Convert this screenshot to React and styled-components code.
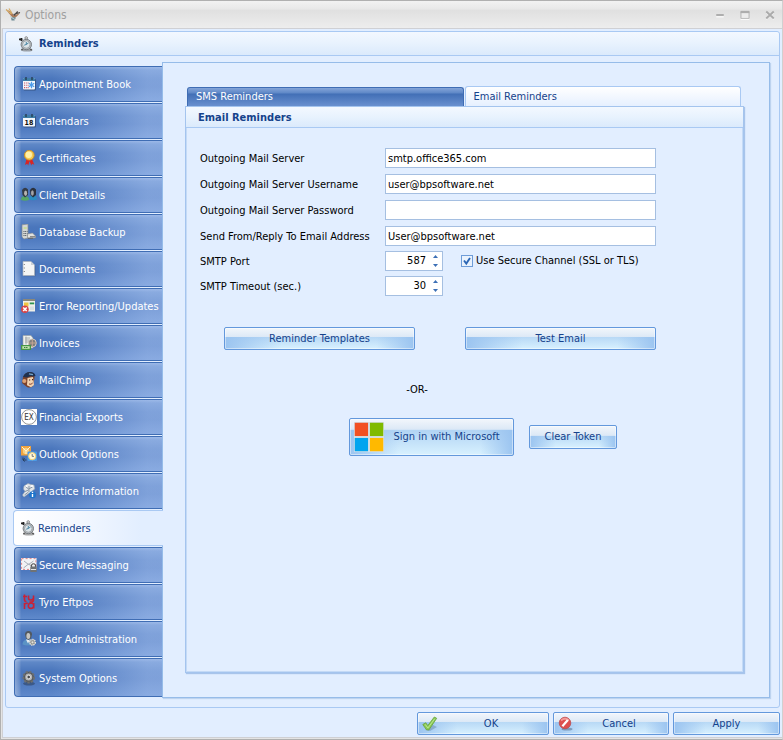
import React, { useState } from 'react';
import styled, { createGlobalStyle, css } from 'styled-components';

const GlobalStyle = createGlobalStyle`
  * {
    box-sizing: border-box;
  }

  body {
    margin: 0;
    font-family: "DejaVu Sans Condensed", "Noto Sans", sans-serif;
    font-size: 11px;
    line-height: 14px;
    color: #000;
  }

  button, input {
    font: inherit;
    margin: 0;
  }
`;

/* ---------- Window ---------- */

const Window = styled.div`
  display: flex;
  flex-direction: column;
  min-height: 100vh;
  background: #e4e4e4;
  border: 1px solid #b0b0b0;
  border-right-color: #d0d0d0;
`;

const TitleBar = styled.header`
  display: flex;
  align-items: center;
  height: 27px;
  padding: 0 1px 0 4px;
  gap: 4px;
  background: linear-gradient(#f2f2f2, #e8e8e8 30%, #e0e0e0 34%, #ededed);
`;

const WindowTitle = styled.h1`
  flex: 1;
  margin: 0;
  font-size: 12px;
  line-height: 16px;
  font-weight: normal;
  color: #a0a0a0;
`;

const WindowButton = styled.button`
  display: flex;
  width: 21px;
  padding: 0 6px 0 5px;
  border: none;
  background: none;
`;

const Body = styled.div`
  flex: 1;
  display: flex;
  flex-direction: column;
  margin: 0 0 1px 1px;
  padding: 2px 2px 2px 2px;
  border: 1px solid #cfd0d4;
  border-right: none;
  background: #e2eeff;
`;

const GroupBox = styled.section`
  flex: 1;
  display: flex;
  flex-direction: column;
  border: 1px solid #a9c9f3;
  border-radius: 3px;
`;

const headerFill = css`
  background: linear-gradient(#f3f8ff, #e9f3fe 45%, #dbeafc);
  border-bottom: 1px solid #a9c9f3;
  color: #15428b;
  font-size: 11px;
  font-weight: bold;
`;

const GroupHeader = styled.h2`
  ${headerFill}
  display: flex;
  align-items: center;
  gap: 5px;
  height: 24px;
  margin: 0;
  padding: 0 12px;
  border-radius: 3px 3px 0 0;
`;

const Columns = styled.div`
  flex: 1;
  display: flex;
  padding: 6px 9px 9px 7px;
`;

/* ---------- Sidebar ---------- */

const Sidebar = styled.nav`
  display: flex;
  flex-direction: column;
  flex: 0 0 149px;
  gap: 1px;
  padding-top: 4px;
`;

const SideItem = styled.button`
  display: flex;
  align-items: center;
  gap: 2px;
  height: 36px;
  margin-left: 1px;
  padding: 0 0 0 6px;
  border: 1px solid #3f6db4;
  border-right: none;
  border-radius: 4px 0 0 4px;
  color: #fff;
  text-align: left;
  white-space: nowrap;
  background:
    linear-gradient(90deg, rgba(255, 255, 255, 0.35), rgba(255, 255, 255, 0.12) 5px, transparent 6px),
    linear-gradient(90deg, transparent 25%, rgba(180, 205, 248, 0.5) 90%),
    linear-gradient(#84a4d8, #5f88c7 3px, #4a76bc 12px, #4874bb 20px, #5f89cb);

  &:last-child {
    height: 39px;
  }

  ${(props) =>
    props.$active &&
    css`
      z-index: 1;
      margin: 0 -1px 0 0;
      border-color: #a9c9f3;
      color: #15428b;
      background: linear-gradient(90deg, #fff, #f4f8ff 40%, #e2eeff 85%);
    `}
`;

const SideLabel = styled.span`
  padding-top: 2px;
`;

/* ---------- Page ---------- */

const Page = styled.main`
  flex: 1;
  display: flex;
  flex-direction: column;
  min-width: 0;
  padding: 23px 25px 24px 22px;
  border: 1px solid #96bce9;
  box-shadow: 1px 1px 1px #bdd3ef;
`;

const TabRow = styled.div`
  display: flex;
  align-items: flex-end;
  gap: 1px;
  padding: 0 3px 0 2px;
`;

const Tab = styled.button`
  flex: 1 1 50%;
  height: 19px;
  padding: 0 8px;
  border: 1px solid #3f6db4;
  border-bottom: none;
  border-radius: 3px 3px 0 0;
  color: #fff;
  text-align: left;
  background: linear-gradient(#84a4d8, #5f88c7 5px, #426fb6 6px, #6990cf);

  ${(props) =>
    props.$active &&
    css`
      height: 20px;
      border-color: #a9c9f3;
      color: #15428b;
      background: linear-gradient(#fff, #e6f0ff);
    `}
`;

const Panel = styled.section`
  flex: 1;
  border: 1px solid #a4c4ee;
  box-shadow: inset 0 0 0 1px #c4daf6, 1px 1px 1px #a8c4ea;
`;

const PanelHeader = styled.h3`
  ${headerFill}
  height: 21px;
  margin: 0;
  padding: 0 12px;
  line-height: 21px;
`;

const Form = styled.form`
  display: flex;
  flex-direction: column;
  padding: 20px 14px;
`;

const FieldGrid = styled.div`
  display: grid;
  grid-template-columns: 185px 271px;
  align-items: center;
  row-gap: ${(props) => (props.$tight ? 5 : 6)}px;
  margin-bottom: ${(props) => (props.$tight ? 31 : 5)}px;

  > label {
    padding-top: 2px;
  }
`;

const TextBox = styled.input`
  width: 100%;
  height: 20px;
  padding: 0 2px;
  border: 1px solid #a5bfe1;
  background: #fff;
  color: #000;
`;

const SpinRow = styled.div`
  display: flex;
  align-items: center;
  gap: 18px;
`;

const SpinBox = styled.div`
  display: flex;
  width: 58px;
  height: 20px;
  border: 1px solid #a5bfe1;
  background: #fff;
`;

const SpinInput = styled.input`
  flex: 1;
  min-width: 0;
  padding: 0 2px;
  border: none;
  text-align: right;
`;

const SpinArrows = styled.div`
  display: flex;
  flex-direction: column;
  width: 14px;
`;

const SpinArrow = styled.button`
  flex: 1;
  display: flex;
  align-items: center;
  justify-content: center;
  padding: 0;
  border: none;
  background: none;
`;

const CheckLabel = styled.label`
  display: flex;
  align-items: center;
  gap: 3px;
  white-space: nowrap;
`;

const CheckBox = styled.input`
  appearance: none;
  width: 12px;
  height: 12px;
  border: 1px solid #6e9cd8;
  background: #dceafb;

  &:checked {
    background: #e9f2fd
      url("data:image/svg+xml,%3Csvg xmlns='http://www.w3.org/2000/svg' viewBox='0 0 10 10'%3E%3Cpath d='M2 4.5l2.3 3L8 2' fill='none' stroke='%232b66b5' stroke-width='1.9'/%3E%3C/svg%3E");
  }
`;

const Button = styled.button`
  display: flex;
  align-items: center;
  width: ${(props) => props.$width}px;
  height: ${(props) => props.$height || 23}px;
  padding: 0 4px;
  border: 1px solid #6398dc;
  border-radius: 2px;
  color: #15428b;
  background:
    linear-gradient(#f2f6fb, #dbe8f6) top / 100% ${(props) => (props.$height > 30 ? 30 : 45)}% no-repeat,
    linear-gradient(90deg, #9bc4f0, transparent 30%, transparent 80%, #9bc4f0),
    linear-gradient(#b3d5f4 35%, #d8f1ff);
  box-shadow: inset 0 0 0 1px rgba(255, 255, 255, 0.45);
`;

const ButtonText = styled.span`
  flex: 1;
  text-align: center;
`;

const ActionRow = styled.div`
  display: flex;
  align-items: center;
  justify-content: ${(props) => (props.$spread ? 'space-between' : 'flex-start')};
  gap: 15px;
  width: 432px;
  margin-left: ${(props) => (props.$spread ? 24 : 149)}px;
`;

const OrText = styled.p`
  width: 434px;
  margin: 33px 0 21px;
  text-align: center;
`;

const Footer = styled.footer`
  display: flex;
  justify-content: flex-end;
  gap: 4px;
  padding-top: 4px;
`;

/* ---------- Icons ---------- */

const Icon = styled.svg.attrs({ viewBox: '0 0 16 16', 'aria-hidden': true })`
  flex: none;
  width: ${(props) => props.$size || 16}px;
  height: ${(props) => props.$size || 16}px;
`;

const Calendar = () => (
  <>
    <rect x="2.5" y="3" width="12.5" height="11.5" rx="1" fill="#2d3f60" opacity=".6" />
    <rect x="2" y="2" width="12" height="11.5" rx="1" fill="#f4f7fb" />
    <path d="M2 3a1 1 0 011-1h10a1 1 0 011 1v2H2z" fill="#3f7fa8" />
    <path d="M5 1v3M11 1v3" stroke="#26384c" strokeWidth="1.3" />
  </>
);

const Clock = () => (
  <>
    <ellipse cx="9" cy="14" rx="5.5" ry="1.6" fill="#555" opacity=".5" />
    <path d="M1 3.4h3.5M3.4 2v3" stroke="#222" strokeWidth="1.6" />
    <path d="M4.5 4.3l1.5 1.4" stroke="#777" />
    <circle cx="8.2" cy="2" r="1.3" fill="#e3e6e8" stroke="#777" strokeWidth=".8" />
    <circle cx="8.3" cy="8.5" r="5.2" fill="#b9bdc0" stroke="#6f7579" strokeWidth=".9" />
    <circle cx="8.3" cy="8.5" r="3.7" fill="#dde5e9" stroke="#858b90" strokeWidth=".6" />
    <path d="M8.3 8.5V6M8.3 8.5l2.3-1.6M6.2 9.2l2-.7" stroke="#397b9b" strokeWidth=".9" />
    <path d="M4.6 12.7l-1.2 1.5M12.3 12.7l1.4 1.5" stroke="#555" strokeWidth="1.4" />
  </>
);

const icons = {
  bird: (
    <>
      <path d="M1 2.5l5 2 3 4 6-2.5-3.2 3.6-2.5 1.4-2.8-1.5L4 6.5z" fill="#a8795a" />
      <path d="M1 2.5L6.5 7M4 1.5l3 5" stroke="#d5ac68" strokeWidth="1.2" />
      <path d="M8.5 7.5L15 5.5M9 8.5l3.7-4" stroke="#4a4745" strokeWidth="1.2" />
      <path d="M6 10l5 .5-1.5 3H6.5z" fill="#6c8993" />
      <path d="M5 9.5l5 3" stroke="#b9cfd4" />
    </>
  ),
  appointment: (
    <>
      <Calendar />
      <path d="M3 7h5M3 9.3h5M3 11.6h5" stroke="#c55568" strokeWidth="1.1" strokeDasharray="1.2 1" />
      <path d="M10.5 5.8v6.4M7.8 7.2l5.4 3.6M13.2 7.2l-5.4 3.6" stroke="#4b9bea" strokeWidth="1.3" />
    </>
  ),
  calendar: (
    <>
      <Calendar />
      <text x="8" y="12" textAnchor="middle" fontSize="7" fontWeight="bold" fill="#111">18</text>
    </>
  ),
  certificate: (
    <>
      <path d="M5.5 9L4 15l2.2-1.2 1 1.7L8.5 11l1.8 4.5.8-1.8 2.2 1L11 9z" fill="#d92525" />
      <circle cx="8.3" cy="5.2" r="4.9" fill="#f4cb51" stroke="#c98c27" strokeWidth=".9" />
      <circle cx="7.8" cy="4.7" r="3.2" fill="#fff0a7" />
    </>
  ),
  clients: (
    <>
      <path d="M0 13q0-4 4-4t4 4q-4 1.5-8 0z" fill="#55a566" />
      <path d="M8 12.5q0-4 4-4t4 4q-4 1.5-8 0z" fill="#2b8cc0" />
      <path d="M1 3q3-4 6-.5V8L4 10.5 1.5 8z" fill="#353b45" />
      <ellipse cx="4.6" cy="6.2" rx="1.5" ry="2.8" fill="#b6b4b0" />
      <path d="M9 3q3-4 6-.5V8l-3 2.5L9.5 8z" fill="#2b313c" />
      <ellipse cx="11.4" cy="6" rx="1.4" ry="2.8" fill="#a5a6a8" />
    </>
  ),
  backup: (
    <>
      <path d="M1 .8L7 0v14l-4 1-2-2z" fill="#d3d6d3" stroke="#868c90" strokeWidth=".7" />
      <path d="M2.7 3h3v2h-3z" fill="#c9dc9c" />
      <path d="M2.5 7.5h4M2.5 9.5h4M2.5 11.5h4" stroke="#4d555e" strokeDasharray="1 .7" />
      <path d="M6.5 10l5-1 3 3v2h-8z" fill="#e0e2e0" stroke="#888" strokeWidth=".6" />
      <path d="M9 12.8h5M7 14.3h5" stroke="#666" />
    </>
  ),
  documents: (
    <>
      <path d="M3 1.5h7.5L14.5 5v10.2H3z" fill="#415a83" opacity=".6" />
      <path d="M2 .5h8L13.5 4v10.5H2z" fill="#f5f5f5" stroke="#acb2ba" strokeWidth=".7" />
      <path d="M10 .5V4h3.5" fill="#ccd0d4" />
      <path d="M3.3 3v10" stroke="#777" strokeDasharray="1 2.5" />
    </>
  ),
  error: (
    <>
      <rect x="2" y="1" width="12" height="12.5" fill="#efefe8" />
      <path d="M2 1h12v2H2z" fill="#8b8778" />
      <path d="M3 4.5h4.5v4H3z" fill="#f0c541" />
      <path d="M8.7 4.5h4.5v1.8H8.7z" fill="#2d9350" />
      <path d="M9 8.5h4v3.5H9z" fill="#d7dfe0" />
      <circle cx="3.9" cy="11.2" r="3.8" fill="#d84347" />
      <path d="M2.2 9.5l3.5 3.5M5.7 9.5L2.2 13" stroke="#fff" strokeWidth="1.6" />
    </>
  ),
  invoices: (
    <>
      <path d="M2 .5h8L12 3v10H2z" fill="#edf0ed" stroke="#9b9fa0" strokeWidth=".6" />
      <path d="M4 3h5M4 5h4M4 7h4M5 1.5v8" stroke="#989ca0" strokeWidth=".8" />
      <circle cx="11.3" cy="8" r="4" fill="#7d7d7c" stroke="#d2c9be" />
      <path d="M11.3 4v8M8 8h7" stroke="#c3a693" />
      <path d="M0 10h10v5H0z" fill="#469647" />
      <path d="M1.3 11.2h7.4v2.6H1.3z" fill="#c6e5b4" />
      <path d="M3 12.5h4" stroke="#347a37" strokeDasharray="1.4 .7" />
    </>
  ),
  mailchimp: (
    <>
      <path d="M2 5q2-5 8-5 4 2 3.5 6l-1.5 8q-3 2.5-6 1l-5-4z" fill="#7b422c" />
      <path d="M6.5 6L12 5l1 8-3 2.3-4-2z" fill="#f3d3b0" />
      <circle cx="3.3" cy="9" r="2.1" fill="#dca174" />
      <path d="M2 5Q4 0 9 0t5.5 4l-2.5.6-2-.6-4 1.5z" fill="#1f3150" />
      <path d="M8 1.8l4 .8" stroke="#78a5c9" strokeWidth="1.2" />
      <path d="M8 8h1.2M11 7.6h1.2" stroke="#422" strokeWidth="1.2" />
      <path d="M8 12q2 1 3.7-1" stroke="#8b4533" fill="none" />
    </>
  ),
  exports: (
    <>
      <rect width="16" height="16" fill="#fff" />
      <circle cx="8" cy="8" r="7.4" fill="none" stroke="#777" strokeWidth=".8" />
      <text x="8" y="10.8" textAnchor="middle" fontSize="8" fill="#333">EX</text>
    </>
  ),
  outlook: (
    <>
      <rect x="0" y="0" width="10" height="9.5" fill="#efa23d" />
      <circle cx="5" cy="5" r="3.2" fill="#f8d183" />
      <path d="M1 1l4 4 4-4M5 5v3" stroke="#fff3d5" fill="none" />
      <rect x="6.5" y="5.5" width="9.5" height="9.5" rx="1" fill="#4c9be6" />
      <circle cx="11.2" cy="10.2" r="3.6" fill="#fff8d7" stroke="#f4ce70" />
      <path d="M11.2 8v2.4h1.7" stroke="#777" fill="none" />
      <path d="M2 11.5v2.5h3.5M3.7 12.3L2 14l1.7 1.5" stroke="#29415f" fill="none" />
    </>
  ),
  practice: (
    <>
      <path d="M3 3l4-2.5 3 1 3 .5.8 4L11 8l.5 3-4-.5L3 14l-1.5-2L4 8.5 2.5 6z" fill="#e2e6ea" stroke="#9aa6b0" strokeWidth=".6" />
      <path d="M4.5 3.5l3 2.5 4-2M4 8.5L7.5 7M8 3v6M3.5 12l4-3" stroke="#8796a5" fill="none" />
      <circle cx="5.5" cy="3" r="1" fill="#fff" />
      <circle cx="11" cy="3" r="1" fill="#fff" />
      <circle cx="11.5" cy="11.7" r="3.5" fill="#1f74cb" />
      <path d="M11.5 11v3M11.5 8.8v1.2" stroke="#fff" strokeWidth="1.4" />
    </>
  ),
  clock: <Clock />,
  messaging: (
    <>
      <rect x="0" y="1" width="15.5" height="12" fill="#f2f3f5" />
      <rect x=".6" y="1.6" width="14.3" height="10.8" fill="none" stroke="#e0868a" strokeDasharray="2 2" />
      <path d="M2.5 11l5-4 3 2M3 4l4.5 3.5L12.5 4" stroke="#a8afb8" fill="none" />
      <path d="M10.5 10V8q2-2.5 4 0v2" stroke="#555" fill="none" strokeWidth="1.2" />
      <rect x="9.3" y="9.5" width="6.4" height="5.5" fill="#6f7274" />
      <path d="M10 12.5h5" stroke="#e3e5e7" />
    </>
  ),
  tyro: (
    <path
      d="M3.5.5v5.3q0 1.7 2 1.7M2 2.5h4M7.5 1.5V4q0 2 2.3 2t2.7-2V1.5M12.5 4v2.3q0 2-4 1.7M3.5 15V9M3.5 11q0-2 3.3-1.8M10 9a2.7 2.7 0 110 5.4 2.7 2.7 0 010-5.4M12.7 9v5.5"
      fill="none"
      stroke="#c92336"
      strokeWidth="1.6"
    />
  ),
  user: (
    <>
      <path d="M1.5 13.5q0-4 4-5h3q3 1 3 5-5 2-10 0z" fill="#5b93c5" />
      <path d="M5 8.5l2 4 2-4z" fill="#e9eef2" />
      <path d="M4 3.5Q4 0 7.5 0T11 3.5l-1 4L7.5 9 5 7.5z" fill="#525961" />
      <ellipse cx="7.3" cy="5" rx="1.9" ry="2.9" fill="#c6c5c1" />
      <circle cx="11.5" cy="11.3" r="2.8" fill="#8e918f" stroke="#e5e1da" strokeWidth="1.5" strokeDasharray="1.4 .7" />
      <circle cx="11.5" cy="11.3" r="1.1" fill="#e5e1da" />
    </>
  ),
  system: (
    <>
      <ellipse cx="8" cy="13.6" rx="6" ry="2" fill="#334b70" opacity=".7" />
      <circle cx="7.7" cy="7.2" r="5.4" fill="#585b5d" stroke="#6c6f71" strokeWidth="1.8" strokeDasharray="2.4 1.2" />
      <circle cx="7.7" cy="7" r="3.5" fill="#b3b5b6" />
      <circle cx="7.7" cy="7" r="1.8" fill="#45484b" stroke="#eceded" strokeWidth=".8" />
    </>
  ),
  ok: (
    <>
      <path d="M3 14l5 1 7-4-4-2z" fill="#567799" opacity=".4" />
      <path d="M.8 8.5l3-1.7 2 2.8L12.3 1l2.4 1.3L6.8 14l-2.4-.3z" fill="#8ccb55" stroke="#64a13d" strokeWidth=".8" />
      <path d="M3.2 8.4L5.9 12l6.8-9.2" fill="none" stroke="#b9e690" />
    </>
  ),
  cancel: (
    <>
      <ellipse cx="9" cy="13" rx="5.5" ry="1.6" fill="#4c6586" opacity=".5" />
      <circle cx="7" cy="7" r="5.8" fill="#dd4f4f" stroke="#b9484b" strokeWidth=".7" />
      <path d="M3 4.5q4-3.5 8 0" stroke="#f49a97" strokeWidth="1.8" fill="none" />
      <path d="M4.4 10.2L9.8 4" stroke="#fff" strokeWidth="2.2" />
    </>
  ),
  minimize: (
    <>
      <path d="M2 8h12" stroke="#aaa" strokeWidth="3" />
      <path d="M2 11h12" stroke="#fff" strokeWidth="1.6" />
    </>
  ),
  maximize: (
    <>
      <path d="M1.5 2.5h13v11h-13z" fill="#ececec" stroke="#b5b5b5" strokeWidth="1.6" />
      <path d="M1 3.2h14" stroke="#adadad" strokeWidth="3.6" />
      <path d="M1 15h14" stroke="#fff" strokeWidth="1.4" />
    </>
  ),
  close: (
    <>
      <path d="M2.5 4.5L14 15M13.5 4.5L2 15" stroke="#fff" strokeWidth="2" />
      <path d="M2 2.5l12 11M14 2.5l-12 11" stroke="#aaa" strokeWidth="3" />
    </>
  ),
};

const MicrosoftLogo = () => (
  <Icon $size={30}>
    <path d="M0 0h16v16H0z" fill="#d5dfe7" />
    <path d="M.4.4h7.1v7.1H.4z" fill="#f25022" />
    <path d="M8.5.4h7.1v7.1H8.5z" fill="#7fba00" />
    <path d="M.4 8.5h7.1v7.1H.4z" fill="#00a4ef" />
    <path d="M8.5 8.5h7.1v7.1H8.5z" fill="#ffb900" />
  </Icon>
);

const Triangle = ({ down }) => (
  <svg width="5" height="3" viewBox="0 0 5 3" aria-hidden="true">
    <path d={down ? 'M0 0h5L2.5 3z' : 'M0 3h5L2.5 0z'} fill="#3b6fb6" />
  </svg>
);

/* ---------- Data ---------- */

const sections = [
  ['Appointment Book', 'appointment'],
  ['Calendars', 'calendar'],
  ['Certificates', 'certificate'],
  ['Client Details', 'clients'],
  ['Database Backup', 'backup'],
  ['Documents', 'documents'],
  ['Error Reporting/Updates', 'error'],
  ['Invoices', 'invoices'],
  ['MailChimp', 'mailchimp'],
  ['Financial Exports', 'exports'],
  ['Outlook Options', 'outlook'],
  ['Practice Information', 'practice'],
  ['Reminders', 'clock'],
  ['Secure Messaging', 'messaging'],
  ['Tyro Eftpos', 'tyro'],
  ['User Administration', 'user'],
  ['System Options', 'system'],
];

const textFields = [
  ['server', 'Outgoing Mail Server', 'smtp.office365.com'],
  ['username', 'Outgoing Mail Server Username', 'user@bpsoftware.net'],
  ['password', 'Outgoing Mail Server Password', ''],
  ['replyTo', 'Send From/Reply To Email Address', 'User@bpsoftware.net'],
];

const Spinner = ({ id, initial }) => {
  const [value, setValue] = useState(initial);

  return (
    <SpinBox>
      <SpinInput id={id} value={value} onChange={(e) => setValue(Number(e.target.value) || 0)} />
      <SpinArrows>
        <SpinArrow type="button" aria-label="Increase" onClick={() => setValue(value + 1)}>
          <Triangle />
        </SpinArrow>
        <SpinArrow type="button" aria-label="Decrease" onClick={() => setValue(value - 1)}>
          <Triangle down />
        </SpinArrow>
      </SpinArrows>
    </SpinBox>
  );
};

const App = () => {
  const [section, setSection] = useState('Reminders');
  const [tab, setTab] = useState('Email Reminders');

  return (
    <>
      <GlobalStyle />
      <Window>
        <TitleBar>
          <Icon>{icons.bird}</Icon>
          <WindowTitle>Options</WindowTitle>
          {['minimize', 'maximize', 'close'].map((name) => (
            <WindowButton key={name} type="button" aria-label={name}>
              <Icon $size={10}>{icons[name]}</Icon>
            </WindowButton>
          ))}
        </TitleBar>

        <Body>
          <GroupBox>
            <GroupHeader>
              <Icon>{icons.clock}</Icon>
              {section}
            </GroupHeader>
            <Columns>
              <Sidebar>
                {sections.map(([label, icon]) => (
                  <SideItem
                    key={label}
                    type="button"
                    $active={label === section}
                    onClick={() => setSection(label)}
                  >
                    <Icon>{icons[icon]}</Icon>
                    <SideLabel>{label}</SideLabel>
                  </SideItem>
                ))}
              </Sidebar>

              <Page>
                <TabRow>
                  {['SMS Reminders', 'Email Reminders'].map((name) => (
                    <Tab key={name} type="button" $active={name === tab} onClick={() => setTab(name)}>
                      {name}
                    </Tab>
                  ))}
                </TabRow>
                <Panel>
                  <PanelHeader>{tab}</PanelHeader>
                  <Form onSubmit={(e) => e.preventDefault()}>
                    <FieldGrid>
                      {textFields.map(([id, label, value]) => (
                        <React.Fragment key={id}>
                          <label htmlFor={id}>{label}</label>
                          <TextBox id={id} type={id === 'password' ? 'password' : 'text'} defaultValue={value} />
                        </React.Fragment>
                      ))}
                    </FieldGrid>
                    <FieldGrid $tight>
                      <label htmlFor="port">SMTP Port</label>
                      <SpinRow>
                        <Spinner id="port" initial={587} />
                        <CheckLabel>
                          <CheckBox type="checkbox" defaultChecked />
                          Use Secure Channel (SSL or TLS)
                        </CheckLabel>
                      </SpinRow>
                      <label htmlFor="timeout">SMTP Timeout (sec.)</label>
                      <Spinner id="timeout" initial={30} />
                    </FieldGrid>

                    <ActionRow $spread>
                      <Button type="button" $width={191}>
                        <ButtonText>Reminder Templates</ButtonText>
                      </Button>
                      <Button type="button" $width={191}>
                        <ButtonText>Test Email</ButtonText>
                      </Button>
                    </ActionRow>
                    <OrText>-OR-</OrText>
                    <ActionRow>
                      <Button type="button" $width={165} $height={38}>
                        <MicrosoftLogo />
                        <ButtonText>Sign in with Microsoft</ButtonText>
                      </Button>
                      <Button type="button" $width={88} $height={24}>
                        <ButtonText>Clear Token</ButtonText>
                      </Button>
                    </ActionRow>
                  </Form>
                </Panel>
              </Page>
            </Columns>
          </GroupBox>

          <Footer>
            <Button type="button" $width={132}>
              <Icon>{icons.ok}</Icon>
              <ButtonText>OK</ButtonText>
            </Button>
            <Button type="button" $width={116}>
              <Icon>{icons.cancel}</Icon>
              <ButtonText>Cancel</ButtonText>
            </Button>
            <Button type="button" $width={107}>
              <ButtonText>Apply</ButtonText>
            </Button>
          </Footer>
        </Body>
      </Window>
    </>
  );
};

export default App;
